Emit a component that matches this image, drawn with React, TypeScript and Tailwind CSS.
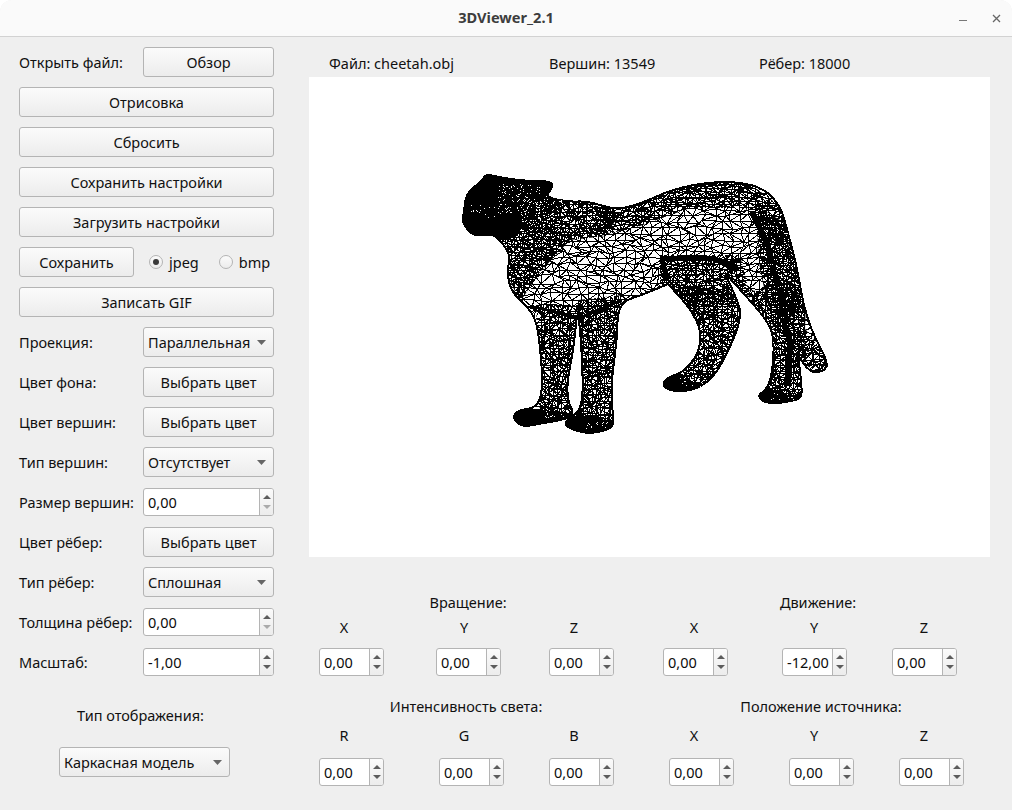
import React, { useMemo } from 'react';

type Pt = [number, number];

// cheetah outline, in window coordinates (repeated points keep a corner sharp)
const outline: Pt[] = [
  [486, 174], [493, 176], [522, 181], [551, 181], [553, 187], [545, 197], [568, 202], [588, 201], [615, 210], [640, 204],
  [673, 189], [710, 182], [740, 182], [765, 189], [781, 207], [788, 233], [797, 267], [803, 303], [812, 332], [828, 362],
  [825, 371], [810, 373], [798, 355], [798, 355], [802, 388], [801, 399], [782, 403], [765, 403], [757, 396], [768, 388], [773, 368],
  [774, 335], [765, 318], [745, 295], [725, 273], [725, 273], [735, 295], [743, 317], [722, 365], [705, 386], [678, 393], [661, 386],
  [668, 377], [682, 373], [698, 355], [702, 332], [690, 308], [668, 284], [668, 284], [642, 295], [618, 303], [617, 342], [611, 382],
  [613, 418], [613, 428], [592, 434], [572, 430], [563, 423], [575, 415], [582, 405], [583, 378], [580, 325], [577, 315], [577, 315],
  [573, 352], [567, 382], [568, 402], [574, 412], [568, 419], [538, 424], [522, 427], [512, 418], [518, 410], [535, 408],
  [542, 395], [542, 368], [538, 328], [532, 312], [518, 298], [511, 290], [507, 273], [510, 258], [507, 250], [500, 240],
  [492, 234], [475, 236], [467, 230], [462, 220], [464, 213], [466, 193], [481, 182],
];

const head: Pt[] = [
  [486, 174], [522, 181], [552, 181], [553, 188], [546, 198], [568, 204], [560, 212], [530, 218], [512, 240], [500, 240],
  [492, 234], [475, 236], [467, 230], [462, 220], [464, 212], [466, 192], [481, 181],
];
const pawFrontA: Pt[] = [[512, 418], [518, 409], [535, 408], [548, 411], [572, 412], [568, 420], [538, 425], [522, 428]];
const pawFrontB: Pt[] = [[563, 424], [575, 415], [590, 416], [612, 418], [613, 429], [592, 435], [572, 431]];
const pawMid: Pt[] = [[660, 386], [668, 376], [684, 373], [692, 382], [705, 387], [678, 394]];
const pawHind: Pt[] = [[756, 396], [767, 387], [780, 393], [801, 393], [801, 400], [782, 404], [765, 404]];

const zones: { pts: Pt[]; cx: number; cy: number; seed: number }[] = [
  { pts: [[490, 180], [560, 195], [620, 213], [606, 236], [570, 240], [540, 272], [520, 302], [505, 270], [470, 236]], cx: 4.5, cy: 4, seed: 11 },
  { pts: [[600, 205], [680, 186], [745, 180], [785, 210], [790, 260], [770, 235], [745, 208], [690, 208], [640, 226], [600, 236]], cx: 7, cy: 4.5, seed: 12 },
  { pts: [[755, 205], [788, 225], [806, 300], [775, 335], [760, 270]], cx: 4, cy: 4, seed: 13 },
  { pts: [[536, 305], [582, 305], [584, 420], [540, 420]], cx: 4.4, cy: 6, seed: 14 },
  { pts: [[578, 300], [622, 295], [615, 428], [570, 428]], cx: 4.4, cy: 6, seed: 15 },
  { pts: [[672, 282], [745, 295], [745, 320], [720, 390], [665, 390]], cx: 4.8, cy: 5.5, seed: 16 },
  { pts: [[745, 290], [806, 295], [803, 400], [760, 400], [772, 335]], cx: 4.4, cy: 5.5, seed: 17 },
  { pts: [[798, 320], [830, 360], [825, 375], [795, 360]], cx: 6, cy: 5, seed: 18 },
  { pts: [[660, 255], [740, 255], [750, 295], [690, 310], [660, 290]], cx: 6, cy: 5, seed: 20 },
];

const toPath = (pts: Pt[]) => 'M' + pts.map((p) => p.join(' ')).join('L') + 'Z';

// closed curve through the midpoints of the outline
function toCurve(pts: Pt[]) {
  const mid = (a: Pt, b: Pt): Pt => [(a[0] + b[0]) / 2, (a[1] + b[1]) / 2];
  const start = mid(pts[pts.length - 1], pts[0]);
  let d = `M${start.join(' ')}`;
  pts.forEach((p, i) => {
    const m = mid(p, pts[(i + 1) % pts.length]);
    d += `Q${p.join(' ')} ${m.join(' ')}`;
  });
  return d + 'Z';
}

function rng(seed: number) {
  let a = seed * 2654435761;
  return () => {
    a = (a + 0x6d2b79f5) | 0;
    let t = Math.imul(a ^ (a >>> 15), 1 | a);
    t = (t + Math.imul(t ^ (t >>> 7), 61 | t)) ^ t;
    return ((t ^ (t >>> 14)) >>> 0) / 4294967296;
  };
}

// jittered triangle mesh over the box of a polygon
function mesh(pts: Pt[], cx: number, cy: number, seed: number) {
  const r = rng(seed);
  const xs = pts.map((p) => p[0]);
  const ys = pts.map((p) => p[1]);
  const x0 = Math.min(...xs) - cx;
  const y0 = Math.min(...ys) - cy;
  const nx = Math.ceil((Math.max(...xs) - x0) / cx) + 2;
  const ny = Math.ceil((Math.max(...ys) - y0) / cy) + 2;
  const grid: Pt[][] = [];
  for (let j = 0; j < ny; j++) {
    const row: Pt[] = [];
    for (let i = 0; i < nx; i++) {
      row.push([
        Math.round(x0 + i * cx + (r() - 0.5) * cx * 0.7),
        Math.round(y0 + j * cy + (r() - 0.5) * cy * 0.7),
      ]);
    }
    grid.push(row);
  }
  let d = '';
  for (let j = 0; j < ny - 1; j++) {
    for (let i = 0; i < nx - 1; i++) {
      const p = grid[j][i];
      const q = r() > 0.5 ? grid[j + 1][i + 1] : null;
      d += `M${p[0]} ${p[1]}L${grid[j][i + 1].join(' ')}M${p[0]} ${p[1]}L${grid[j + 1][i].join(' ')}`;
      if (q) d += `M${p[0]} ${p[1]}L${q.join(' ')}`;
      else d += `M${grid[j][i + 1].join(' ')}L${grid[j + 1][i].join(' ')}`;
    }
  }
  return d;
}

function speckle(x0: number, y0: number, x1: number, y1: number, n: number, seed: number) {
  const r = rng(seed);
  let d = '';
  for (let i = 0; i < n; i++) {
    const x = Math.round(x0 + r() * (x1 - x0));
    const y = Math.round(y0 + r() * (y1 - y0));
    d += `M${x} ${y}h1v1h-1z`;
  }
  return d;
}

function Cheetah() {
  const base = useMemo(() => mesh(outline, 9, 6, 3), []);
  const zonePaths = useMemo(() => zones.map((z) => mesh(z.pts, z.cx, z.cy, z.seed)), []);
  const headDots = useMemo(
    () =>
      speckle(498, 184, 540, 214, 110, 5) +
      speckle(470, 205, 500, 218, 18, 6) +
      speckle(520, 195, 566, 222, 80, 7),
    [],
  );
  const pawDots = useMemo(
    () =>
      speckle(545, 410, 566, 418, 14, 8) +
      speckle(585, 417, 610, 428, 18, 9) +
      speckle(770, 393, 798, 399, 14, 10) +
      speckle(680, 376, 700, 386, 14, 21),
    [],
  );
  const foldDots = useMemo(() => speckle(758, 225, 790, 345, 60, 22), []);

  return (
    <svg viewBox="309 77 681 480" className="block w-full h-full" shapeRendering="crispEdges">
      <defs>
        <clipPath id="body">
          <path d={toCurve(outline)} />
        </clipPath>
        {zones.map((z, i) => (
          <clipPath key={z.seed} id={`zone-${i}`}>
            <path d={toPath(z.pts)} />
          </clipPath>
        ))}
      </defs>
      <g clipPath="url(#body)" stroke="#000" fill="none">
        <path d={base} />
        {zones.map((z, i) => (
          <g key={z.seed} clipPath={`url(#zone-${i})`}>
            <path d={zonePaths[i]} />
          </g>
        ))}
        {/* dark folds of the mesh */}
        <path d="M662 258L667 281M662 259L683 258L713 258L737 270" strokeWidth="5" />
        <path d="M752 212L767 243L783 303L790 345L788 385" strokeWidth="6" />
        <path d="M530 306L580 318L622 300" strokeWidth="3" />
        <path d="M583 378L612 372" strokeWidth="2" />
      </g>
      <path d={toCurve(outline)} fill="none" stroke="#000" strokeWidth="2" />
      <path d={toCurve(head)} fill="#000" />
      <path d={toCurve(pawFrontA)} fill="#000" />
      <path d={toCurve(pawFrontB)} fill="#000" />
      <path d={toCurve(pawMid)} fill="#000" />
      <path d={toCurve(pawHind)} fill="#000" />
      <path d={headDots} fill="#fff" />
      <path d={pawDots} fill="#fff" />
      <path d={foldDots} fill="#fff" />
    </svg>
  );
}

function PushButton({ label, className = 'w-full' }: { label: string; className?: string }) {
  return (
    <div className={`h-[30px] pt-[1px] flex items-center justify-center rounded-[3px] border border-[#b4b4b4] bg-linear-to-b from-[#fbfbfb] to-[#ececec] ${className}`}>
      {label}
    </div>
  );
}

function Triangle({ down = false, color = '#5c5c5c', w = 8, h = 4 }: { down?: boolean; color?: string; w?: number; h?: number }) {
  return (
    <svg width={w} height={h} viewBox="0 0 8 4" preserveAspectRatio="none" className="block">
      <polygon points={down ? '0,0 8,0 4,4' : '0,4 8,4 4,0'} fill={color} />
    </svg>
  );
}

function Combo({ value, className = 'w-[131px]' }: { value: string; className?: string }) {
  return (
    <div className={`h-[30px] flex items-center justify-between pl-[4px] pr-[7px] rounded-[3px] border border-[#b4b4b4] bg-linear-to-b from-[#fbfbfb] to-[#ececec] ${className}`}>
      <span className="pt-[1px]">{value}</span>
      <Triangle down w={9} h={5} color="#666666" />
    </div>
  );
}

function Spin({ value, className = 'w-[65px]', lowDisabled = false }: { value: string; className?: string; lowDisabled?: boolean }) {
  return (
    <div className={`h-[28px] flex rounded-[3px] border border-[#b4b4b4] bg-white overflow-hidden ${className}`}>
      <div className="flex-1 flex items-center pl-[4px] pt-[1px] text-[#0c0c0c]">{value}</div>
      <div className="w-[14px] flex flex-col items-center justify-center gap-[6px] border-l border-[#b4b4b4] bg-linear-to-b from-[#fbfbfb] to-[#ececec]">
        <Triangle />
        <Triangle down color={lowDisabled ? '#ababab' : '#5c5c5c'} />
      </div>
    </div>
  );
}

function Radio({ label, checked = false }: { label: string; checked?: boolean }) {
  return (
    <div className="flex items-center gap-[6px]">
      <div className="w-[14px] h-[14px] rounded-full border border-[#b4b4b4] bg-linear-to-b from-[#fbfbfb] to-[#ececec] flex items-center justify-center">
        {checked && <div className="w-[6px] h-[6px] rounded-full bg-[#3a3a3a]" />}
      </div>
      <span className="pt-[1px]">{label}</span>
    </div>
  );
}

function Row({ label, children }: { label: string; children: React.ReactNode }) {
  return (
    <div className="h-[30px] flex items-center">
      <div className="w-[124px] shrink-0 pt-[1px]">{label}</div>
      {children}
    </div>
  );
}

function AxisLabels({ names }: { names: string[] }) {
  return (
    <div className="grid grid-cols-[120px_110px_120px_120px_110px_70px] h-[20px] leading-[20px]">
      {names.map((n, i) => (
        <div key={i} className="w-[70px] text-center">
          {n}
        </div>
      ))}
    </div>
  );
}

export default function App() {
  return (
    <div className="w-[1012px] h-[810px] overflow-hidden rounded-t-[12px] bg-[#efefef] text-[14.5px] text-[#111] font-['Noto_Sans',sans-serif] flex flex-col">
      {/* Title bar */}
      <div className="h-[37px] shrink-0 relative flex items-center justify-center bg-[#fafafa] border-b border-[#d2d2d2]">
        <span className="font-bold text-[#3d3d3d] text-[14.6px]">3DViewer_2.1</span>
        <div className="absolute right-[11px] top-[14px] flex items-start gap-[25px]">
          <svg width="8" height="8" viewBox="0 0 8 8">
            <path d="M0 6.5H8" stroke="#777" strokeWidth="1" />
          </svg>
          <svg width="9" height="9" viewBox="0 0 9 9">
            <path d="M1 1L8 8M8 1L1 8" stroke="#666" strokeWidth="1.3" />
          </svg>
        </div>
      </div>

      <div className="flex-1 flex">
        {/* Left panel */}
        <div className="w-[309px] shrink-0 pl-[19px] pt-[10px]">
          <div className="w-[255px] flex flex-col gap-[10px]">
            <Row label="Открыть файл:">
              <PushButton label="Обзор" className="w-[131px]" />
            </Row>
            <PushButton label="Отрисовка" />
            <PushButton label="Сбросить" />
            <PushButton label="Сохранить настройки" />
            <PushButton label="Загрузить настройки" />
            <div className="h-[30px] flex items-center">
              <PushButton label="Сохранить" className="w-[115px]" />
              <div className="ml-[15px] flex items-center gap-[20px]">
                <Radio label="jpeg" checked />
                <Radio label="bmp" />
              </div>
            </div>
            <PushButton label="Записать GIF" />
            <Row label="Проекция:">
              <Combo value="Параллельная" />
            </Row>
            <Row label="Цвет фона:">
              <PushButton label="Выбрать цвет" className="w-[131px]" />
            </Row>
            <Row label="Цвет вершин:">
              <PushButton label="Выбрать цвет" className="w-[131px]" />
            </Row>
            <Row label="Тип вершин:">
              <Combo value="Отсутствует" />
            </Row>
            <Row label="Размер вершин:">
              <Spin value="0,00" className="w-[131px]" lowDisabled />
            </Row>
            <Row label="Цвет рёбер:">
              <PushButton label="Выбрать цвет" className="w-[131px]" />
            </Row>
            <Row label="Тип рёбер:">
              <Combo value="Сплошная" />
            </Row>
            <Row label="Толщина рёбер:">
              <Spin value="0,00" className="w-[131px]" lowDisabled />
            </Row>
            <Row label="Масштаб:">
              <Spin value="-1,00" className="w-[131px]" />
            </Row>
          </div>
          <div className="mt-[28px] flex flex-col items-start">
            <div className="w-[243px] text-center h-[20px] leading-[20px]">Тип отображения:</div>
            <Combo value="Каркасная модель" className="w-[171px] mt-[22px] ml-[40px]" />
          </div>
        </div>

        {/* Right panel */}
        <div className="flex-1">
          <div className="h-[40px] flex items-end pb-[4px] pl-[20px] leading-[20px]">
            <div className="w-[220px]">Файл: cheetah.obj</div>
            <div className="w-[210px]">Вершин: 13549</div>
            <div>Рёбер: 18000</div>
          </div>
          <div className="w-[681px] h-[480px] bg-white">
            <Cheetah />
          </div>

          <div className="mt-[35px] flex h-[20px] leading-[20px]">
            <div className="w-[318px] text-center">Вращение:</div>
            <div className="w-[382px] text-center">Движение:</div>
          </div>
          <div className="mt-[5px]">
            <AxisLabels names={['X', 'Y', 'Z', 'X', 'Y', 'Z']} />
          </div>
          <div className="mt-[11px] pl-[10px] grid grid-cols-[117px_113px_114px_119px_110px_65px]">
            <Spin value="0,00" />
            <Spin value="0,00" />
            <Spin value="0,00" />
            <Spin value="0,00" />
            <Spin value="-12,00" />
            <Spin value="0,00" />
          </div>

          <div className="mt-[20px] flex h-[20px] leading-[20px]">
            <div className="w-[314px] text-center">Интенсивность света:</div>
            <div className="w-[396px] text-center">Положение источника:</div>
          </div>
          <div className="mt-[9px]">
            <AxisLabels names={['R', 'G', 'B', 'X', 'Y', 'Z']} />
          </div>
          <div className="mt-[13px] pl-[10px] grid grid-cols-[120px_110px_120px_120px_110px_65px]">
            <Spin value="0,00" />
            <Spin value="0,00" />
            <Spin value="0,00" />
            <Spin value="0,00" />
            <Spin value="0,00" />
            <Spin value="0,00" />
          </div>
        </div>
      </div>
    </div>
  );
}
